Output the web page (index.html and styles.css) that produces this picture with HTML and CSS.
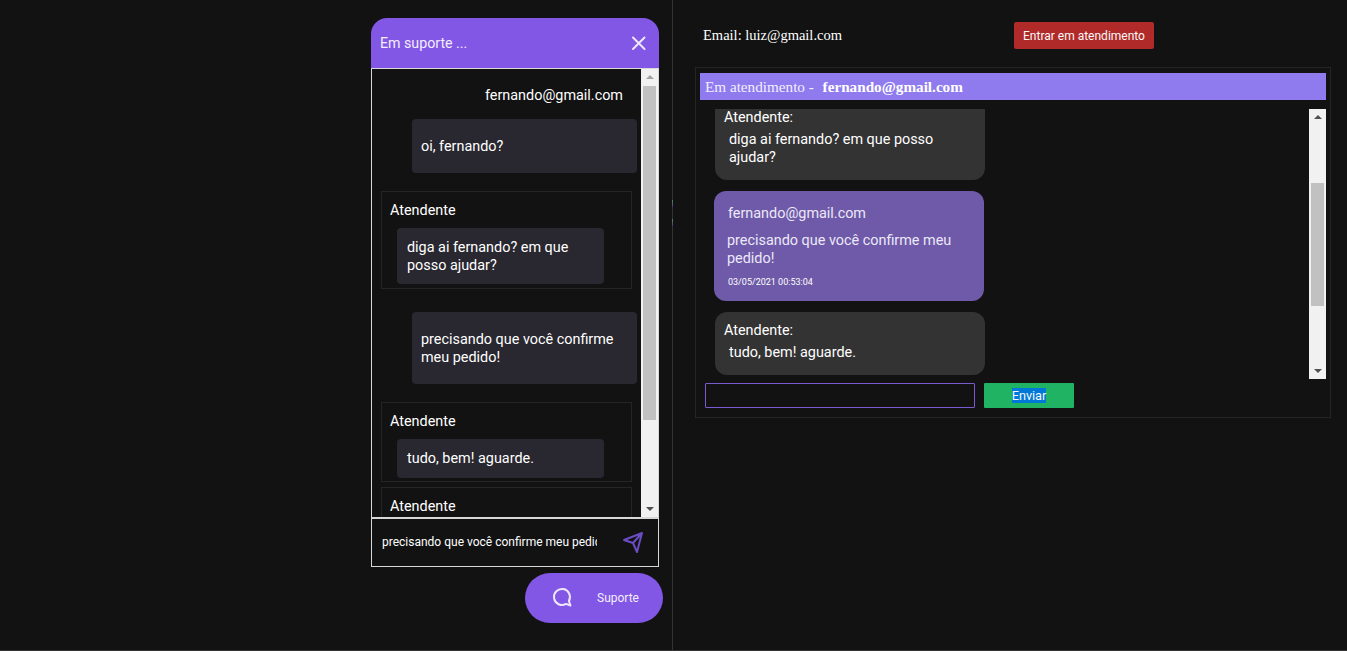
FILE: index.html
```html
<!DOCTYPE html>
<html lang="en">
<head>
  <meta charset="UTF-8" />
  <meta name="viewport" content="width=device-width, initial-scale=1.0" />
  <title>Suporte</title>
  <link rel="stylesheet" href="styles.css">
</head>
<body>
  <div class="left-pane">
    <span class="divider-mark mark-a"></span>
    <span class="divider-mark mark-b"></span>
    <div class="widget">
      <div class="widget-header">
        <span>Em suporte ...</span>
        <svg class="close-icon" width="24" height="24" viewBox="0 0 24 24" fill="none" stroke="#eee6fb" stroke-width="2" stroke-linecap="round"><path d="M6 6.5 L17.5 18 M17.5 6.5 L6 18" /></svg>
      </div>
      <div class="widget-body">
        <div class="widget-messages">
          <div class="user-email">fernando@gmail.com</div>
          <div class="user-bubble first">oi, fernando?</div>
          <div class="agent-box box-a">
            <div class="agent-name">Atendente</div>
            <div class="agent-bubble">diga ai fernando? em que posso ajudar?</div>
          </div>
          <div class="user-bubble second">precisando que você confirme meu pedido!</div>
          <div class="agent-box box-b">
            <div class="agent-name">Atendente</div>
            <div class="agent-bubble">tudo, bem! aguarde.</div>
          </div>
          <div class="agent-box box-c">
            <div class="agent-name">Atendente</div>
          </div>
        </div>
        <div class="scrollbar scrollbar-left">
          <span class="arrow-up faded"></span>
          <div class="track"><div class="thumb"></div></div>
          <span class="arrow-down"></span>
        </div>
      </div>
      <div class="widget-input">
        <input type="text" value="precisando que você confirme meu pedido!" />
        <svg class="send-icon" width="24" height="24" viewBox="0 0 24 24" fill="none" stroke="#6a4cc4" stroke-width="2" stroke-linejoin="round" stroke-linecap="round"><path d="M21 3 L3 10 L12 13 L16 22 Z M21 3 L12 13" /></svg>
      </div>
    </div>
    <button class="support-btn">
      <svg width="24" height="24" viewBox="0 0 24 24" fill="none" stroke="#eee6fb" stroke-width="2" stroke-linejoin="round"><path d="M19.5 19.5 L15 17.9 A8 8 0 1 1 17.9 15 Z" /></svg>
      <span>Suporte</span>
    </button>
  </div>

  <div class="right-pane">
    <div class="top-row">
      <span class="agent-email">Email: luiz@gmail.com</span>
      <button class="enter-btn">Entrar em atendimento</button>
    </div>
    <div class="panel">
      <div class="panel-title">Em atendimento - <strong>fernando@gmail.com</strong></div>
      <div class="transcript">
        <div class="transcript-list">
          <div class="chat-card clipped">
            <div class="chat-name">Atendente:</div>
            <div class="chat-text">diga ai fernando? em que posso ajudar?</div>
          </div>
          <div class="client-card">
            <div class="client-name">fernando@gmail.com</div>
            <div class="client-text">precisando que você confirme meu pedido!</div>
            <div class="client-date">03/05/2021 00:53:04</div>
          </div>
          <div class="chat-card last">
            <div class="chat-name">Atendente:</div>
            <div class="chat-text">tudo, bem! aguarde.</div>
          </div>
        </div>
        <div class="scrollbar scrollbar-right">
          <span class="arrow-up"></span>
          <div class="track"><div class="thumb"></div></div>
          <span class="arrow-down"></span>
        </div>
      </div>
      <div class="reply-row">
        <input type="text" class="reply-input" />
        <button class="send-btn"><span>Enviar</span></button>
      </div>
    </div>
  </div>
</body>
</html>
```

FILE: styles.css
```css
* {
  margin: 0;
  padding: 0;
  box-sizing: border-box;
}

html, body {
  height: 651px;
  overflow: hidden;
}

body {
  background: #121212;
  color: #fff;
  display: flex;
  font-family: Roboto, sans-serif;
  border-bottom: 1px solid #333;
}

/* left side: support widget */
.left-pane {
  position: relative;
  width: 673px;
  height: 650px;
  border-right: 1px solid #333;
  padding: 18px 0 0 371px;
  display: flex;
  flex-direction: column;
  align-items: flex-start;
}

.divider-mark {
  position: absolute;
  right: -1px;
  width: 1px;
  height: 7px;
  background: linear-gradient(#4f8a58, #4a3c86);
}

.mark-a {
  top: 200px;
}

.mark-b {
  top: 219px;
}

.widget {
  width: 288px;
}

.widget-header {
  height: 50px;
  background: #8257e5;
  border-radius: 16px 16px 0 0;
  display: flex;
  align-items: center;
  justify-content: space-between;
  padding: 0 8px 0 9px;
  font-size: 14.2px;
  color: #f3eefc;
}

.close-icon {
  display: block;
}

.widget-body {
  height: 451px;
  display: flex;
  border: 1px solid #d8d8d8;
  border-bottom-width: 2px;
  overflow: hidden;
}

.widget-messages {
  flex: 1;
  overflow: hidden;
  font-size: 14.4px;
  line-height: 18px;
}

.user-email {
  margin: 18px 0 0 113px;
  font-size: 14.4px;
}

.user-bubble {
  background: #29272f;
  border-radius: 4px;
  width: 225px;
  margin-left: 40px;
  padding: 2px 9px 0;
  display: flex;
  align-items: center;
}

.user-bubble.first {
  height: 54px;
  margin-top: 14px;
}

.user-bubble.second {
  height: 72px;
  margin-top: 23px;
}

.agent-box {
  width: 251px;
  margin-left: 9px;
  border: 1px solid #252525;
  padding: 10px 0 0 8px;
}

.box-a {
  height: 98px;
  margin-top: 18px;
}

.box-b {
  height: 80px;
  margin-top: 18px;
}

.box-c {
  height: 60px;
  margin-top: 5px;
}

.agent-name {
  font-size: 14.4px;
  line-height: 18px;
}

.agent-bubble {
  background: #29272f;
  border-radius: 4px;
  width: 207px;
  margin: 8px 0 0 7px;
  padding: 11px 10px 9px;
}

.box-b .agent-bubble {
  min-height: 39px;
}

.scrollbar {
  width: 17px;
  background: #f1f1f1;
  display: flex;
  flex-direction: column;
  align-items: center;
  justify-content: space-between;
  flex-shrink: 0;
  padding: 6px 0;
}

.track {
  flex: 1;
  width: 100%;
  padding: 0 2px;
}

.thumb {
  background: #c1c1c1;
  width: 100%;
}

.arrow-up,
.arrow-down {
  width: 0;
  height: 0;
  border-left: 4px solid transparent;
  border-right: 4px solid transparent;
}

.arrow-up {
  border-bottom: 4px solid #505050;
}

.arrow-up.faded {
  border-bottom-color: #a3a3a3;
}

.arrow-down {
  border-top: 4px solid #505050;
}

.scrollbar-left .track {
  padding-top: 7px;
}

.scrollbar-left .thumb {
  height: 334px;
}

.scrollbar-right .track {
  padding-top: 64px;
}

.scrollbar-right .thumb {
  height: 123px;
}

.widget-input {
  height: 48px;
  border: 1px solid #d8d8d8;
  border-top: none;
  display: flex;
  align-items: center;
  justify-content: space-between;
  padding: 0 13px 2px 10px;
}

.widget-input input {
  width: 215px;
  background: transparent;
  border: none;
  outline: none;
  color: #fff;
  font-family: Roboto, sans-serif;
  font-size: 12px;
}

.support-btn {
  width: 138px;
  height: 50px;
  margin: 6px 0 0 154px;
  background: #8257e5;
  border: none;
  border-radius: 25px;
  color: #f3eefc;
  font-family: Roboto, sans-serif;
  font-size: 12px;
  display: flex;
  align-items: center;
  padding-left: 26px;
  gap: 22px;
}

/* right side: attendant panel */
.right-pane {
  flex: 1;
  padding-left: 22px;
  font-family: "Liberation Serif", serif;
}

.top-row {
  height: 67px;
  display: flex;
  align-items: center;
  padding: 3px 0 0 8px;
}

.agent-email {
  width: 311px;
  font-size: 14.5px;
}

.enter-btn {
  width: 140px;
  height: 27px;
  background: #b02a2a;
  border: none;
  border-radius: 2px;
  padding-top: 1px;
  color: #f8f8f8;
  font-family: Roboto, sans-serif;
  font-size: 12px;
}

.panel {
  width: 636px;
  height: 351px;
  border: 1px solid #252525;
  padding: 5px 4px 0;
}

.panel-title {
  height: 27px;
  background: #8f7bee;
  padding: 1px 0 0 5px;
  display: flex;
  align-items: center;
  font-size: 15.2px;
  color: #f3efff;
  white-space: pre;
}

.panel-title strong {
  margin-left: 5px;
  color: #fff;
}

.transcript {
  height: 270px;
  margin-top: 9px;
  display: flex;
  justify-content: space-between;
  overflow: hidden;
}

.transcript-list {
  font-family: Roboto, sans-serif;
  font-size: 14.4px;
  line-height: 18px;
  padding-left: 14px;
}

.chat-card {
  width: 270px;
  background: #333;
  border-radius: 12px;
  margin-left: 1px;
  padding: 10px 9px;
}

.chat-card.clipped {
  height: 71px;
  border-radius: 0 0 12px 12px;
  padding-top: 0;
}

.chat-card.last {
  height: 63px;
  margin-top: 11px;
}

.chat-name {
  font-size: 14.4px;
}

.chat-text {
  margin: 4px 0 0 5px;
}

.client-card {
  width: 270px;
  height: 110px;
  margin-top: 11px;
  background: #6e5aa8;
  border-radius: 12px;
  padding: 14px 13px 0;
  color: #ece8f8;
}

.client-name {
  font-size: 14.4px;
  padding-left: 1px;
}

.client-text {
  margin-top: 9px;
}

.client-date {
  margin-top: 8px;
  padding-left: 1px;
  font-size: 9px;
  line-height: 12px;
  color: #fff;
}

.reply-row {
  display: flex;
  margin: 4px 0 0 5px;
  gap: 9px;
}

.reply-input {
  width: 270px;
  height: 25px;
  background: #121212;
  border: 1px solid #7b59d0;
  border-radius: 1px;
  outline: none;
}

.send-btn {
  width: 90px;
  height: 25px;
  background: #20b363;
  border: none;
  border-radius: 1px;
  color: #f8f8f8;
  font-family: Roboto, sans-serif;
  font-size: 12.7px;
}

.send-btn span {
  background: #0078d7;
}
```
